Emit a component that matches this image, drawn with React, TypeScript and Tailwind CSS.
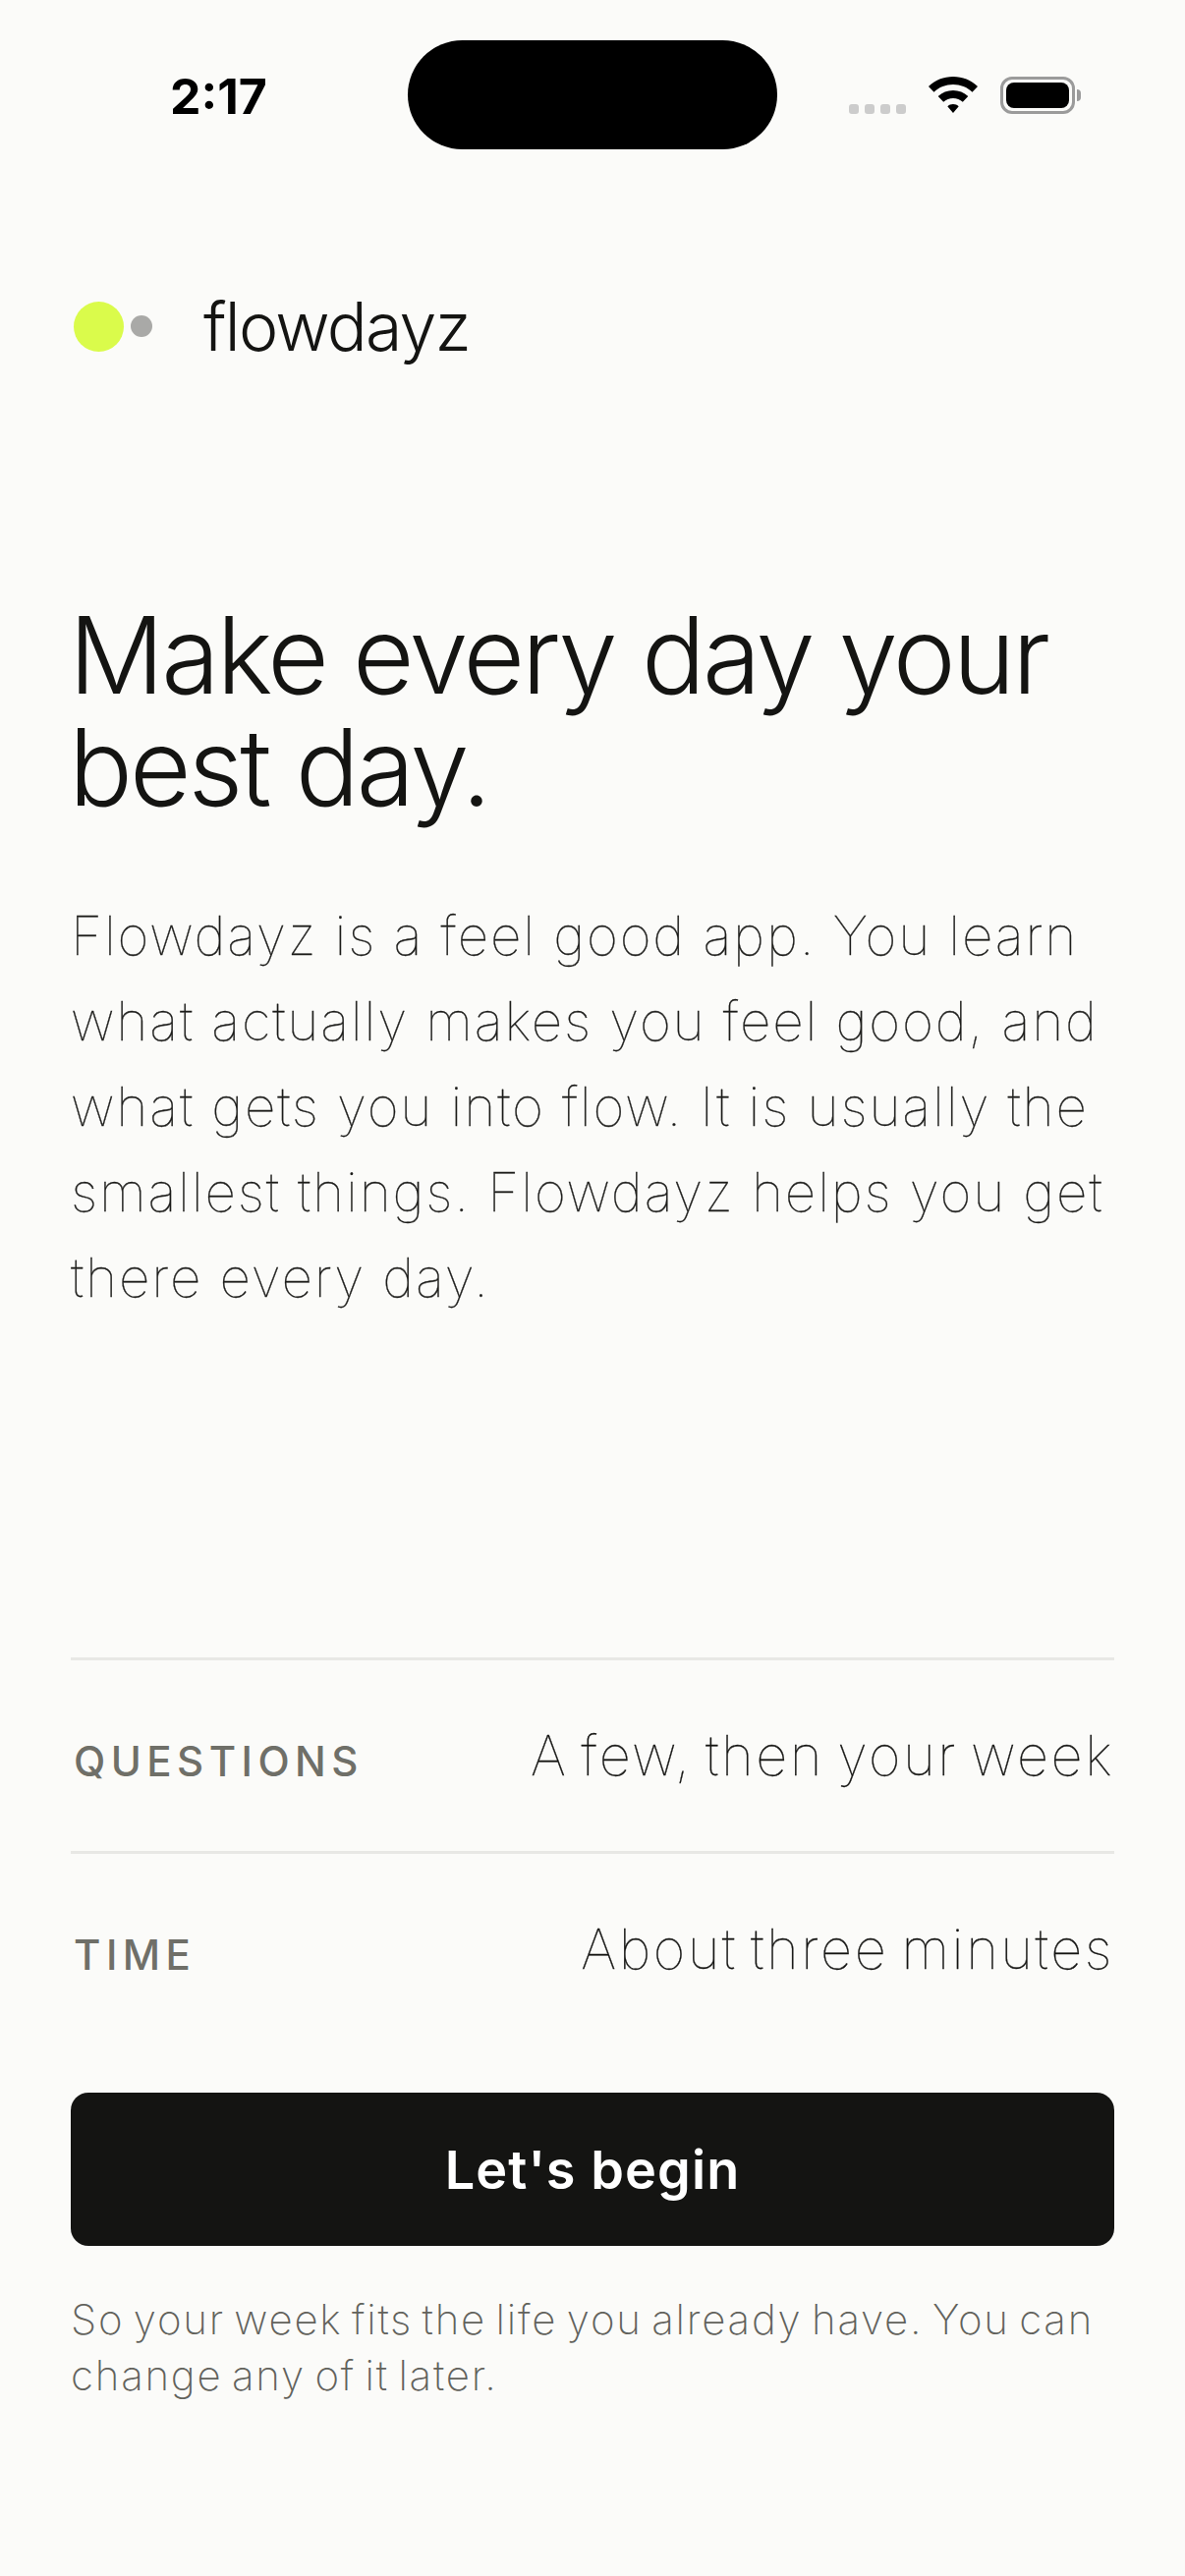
import React from 'react'

const inter = { fontFamily: 'Inter, "Noto Sans", sans-serif' }

function StatusIcons() {
  return (
    <div className="flex items-center">
      {/* no-signal dots */}
      <div className="mt-[28px] flex gap-[6px]">
        <span className="h-[10px] w-[10px] rounded-[3px] bg-[#cccccc]" />
        <span className="h-[10px] w-[10px] rounded-[3px] bg-[#cccccc]" />
        <span className="h-[10px] w-[10px] rounded-[3px] bg-[#cccccc]" />
        <span className="h-[10px] w-[10px] rounded-[3px] bg-[#cccccc]" />
      </div>
      <svg className="ml-[22px]" width="52" height="38" viewBox="0 0 52 38">
        <path d="M26 0C35.5 0 44.5 3.6 51 10L45.5 15.7C40.4 10.8 33.4 8 26 8S11.6 10.8 6.500 15.7L1 10C7.500 3.600 16.500 0 26 0Z" fill="#000" />
        <path d="M26 14C31.800 14 37.200 16.200 41.300 20.100L35.800 25.800C33.200 23.300 29.700 21.900 26 21.900S18.800 23.300 16.200 25.800L10.700 20.100C14.800 16.200 20.200 14 26 14Z" fill="#000" />
        <path d="M26 28C28.200 28 30.200 28.800 31.700 30.200L26 37L20.300 30.200C21.800 28.800 23.800 28 26 28Z" fill="#000" />
      </svg>
      <div className="ml-[22px] flex items-center">
        <div className="h-[38px] w-[76px] rounded-[12px] border-[3px] border-[#9b9b9b] p-[3px]">
          <div className="h-full w-full rounded-[8px] bg-black" />
        </div>
        <div className="ml-[2px] h-[12px] w-[4px] rounded-r-full bg-[#9b9b9b]" />
      </div>
    </div>
  )
}

function InfoRow({ label, value }: { label: string; value: string }) {
  return (
    <div className="flex h-[197px] items-center justify-between border-t-[3px] border-[#e8e8e5]">
      <span className="pl-[3px] pt-[10px] text-[42px] font-medium tracking-[0.13em] text-[#6f6f68]">{label}</span>
      <span className="text-[56px] font-thin tracking-[0.045em] [word-spacing:-5px] text-[#141412] [-webkit-text-stroke:0.3px_#141412]">
        {value}
      </span>
    </div>
  )
}

export default function App() {
  return (
    <div className="flex h-[2622px] w-[1206px] flex-col bg-[#fbfbf9] text-[#141412]" style={inter}>
      {/* status bar */}
      <div className="relative flex h-[152px] shrink-0 items-start justify-between pl-[173px] pr-[106px] pt-[41px]">
        <span className="mt-[25px] text-[50px] font-bold leading-[64px] text-black">2:17</span>
        <div className="absolute left-[415px] top-[41px] h-[111px] w-[376px] rounded-[56px] bg-black" />
        <div className="mt-[37px]">
          <StatusIcons />
        </div>
      </div>

      <div className="flex flex-1 flex-col px-[72px]">
        {/* logo */}
        <div className="mt-[135px] flex h-[90px] items-center">
          <span className="ml-[3px] h-[51px] w-[51px] rounded-full bg-[#dafb4b]" />
          <span className="ml-[7px] h-[22px] w-[22px] rounded-full bg-[#a9a9a7]" />
          <span className="ml-[52px] text-[68px] font-light tracking-[-0.025em]">flowdayz</span>
        </div>

        <h1 className="-ml-[2px] mt-[233px] text-[108px] font-light leading-[114px] tracking-[-0.028em]">
          Make every day your
          <br />
          best day.
        </h1>

        <p className="mt-[71px] text-[55px] font-thin leading-[87px] tracking-[0.033em] text-[#1c1c1a] [-webkit-text-stroke:0.3px_#1c1c1a]">
          Flowdayz is a feel good app. You learn what actually makes you feel good, and what gets you into flow. It is
          usually the smallest things. Flowdayz helps you get there every day.
        </p>

        <div className="mt-auto">
          <InfoRow label="QUESTIONS" value="A few, then your week" />
          <InfoRow label="TIME" value="About three minutes" />
        </div>

        <button className="mt-[49px] h-[156px] w-full rounded-[18px] bg-[#141412] text-[54px] font-semibold tracking-[0.02em] text-white">
          Let's begin
        </button>

        <p className="mb-[176px] mt-[46px] text-[42px] font-extralight leading-[57px] tracking-[0.042em] [word-spacing:-4px] text-[#62625c]">
          So your week fits the life you already have. You can change any of it later.
        </p>
      </div>
    </div>
  )
}
